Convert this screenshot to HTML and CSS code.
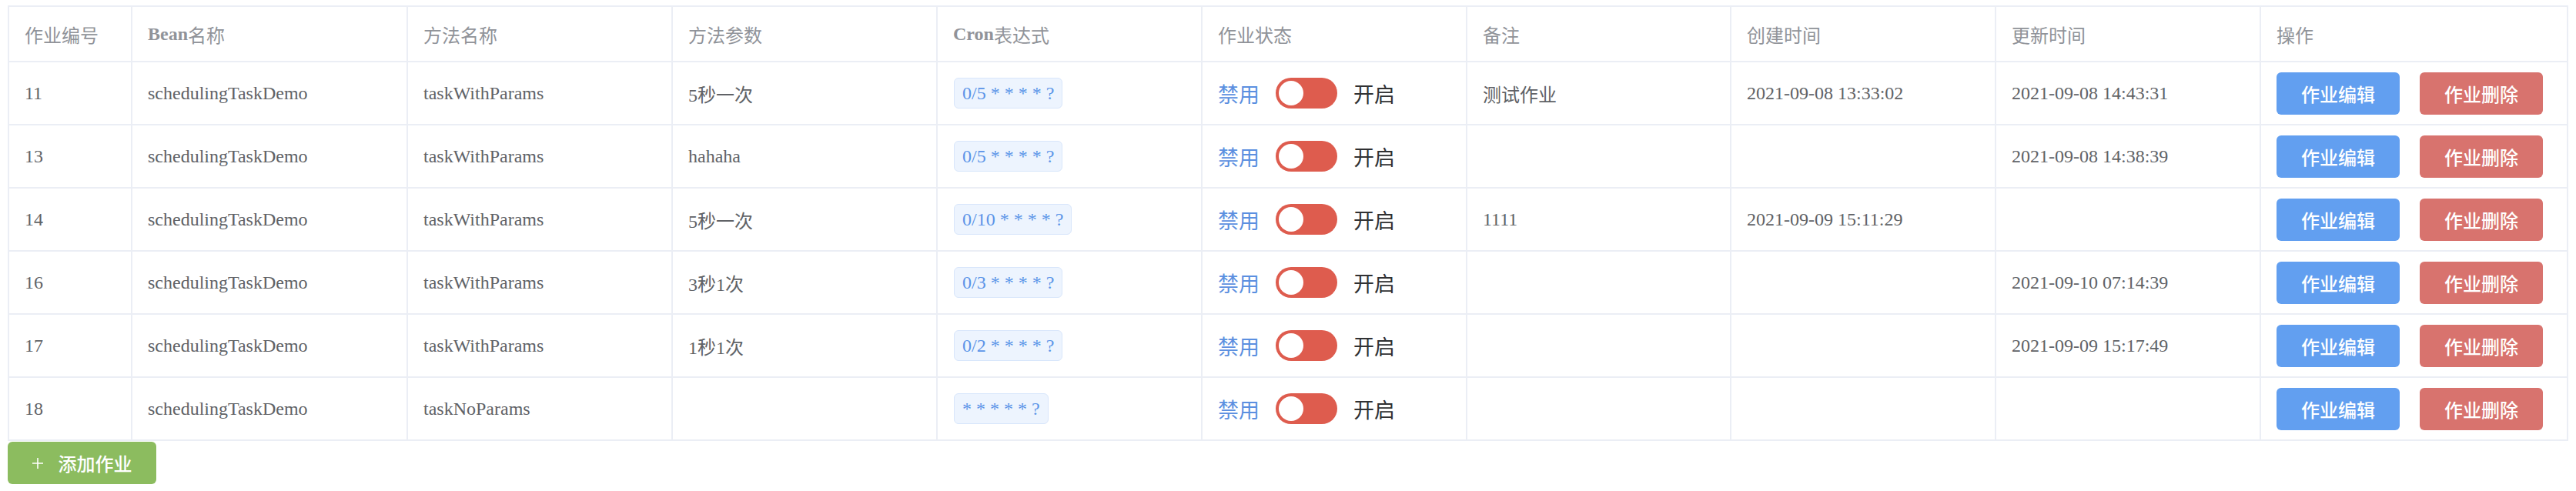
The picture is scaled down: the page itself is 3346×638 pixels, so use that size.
FILE: index.html
```html
<!DOCTYPE html>
<html lang="zh-CN">
<head>
<meta charset="utf-8">
<title>作业列表</title>
<link rel="stylesheet" href="styles.css">
</head>
<body>
<div class="page">
  <div class="table">
    <div class="row head">
      <div class="cell">作业编号</div>
      <div class="cell"><b>Bean</b>名称</div>
      <div class="cell">方法名称</div>
      <div class="cell">方法参数</div>
      <div class="cell"><b>Cron</b>表达式</div>
      <div class="cell">作业状态</div>
      <div class="cell">备注</div>
      <div class="cell">创建时间</div>
      <div class="cell">更新时间</div>
      <div class="cell">操作</div>
    </div>

    <div class="row">
      <div class="cell">11</div>
      <div class="cell">schedulingTaskDemo</div>
      <div class="cell">taskWithParams</div>
      <div class="cell">5秒一次</div>
      <div class="cell"><span class="tag">0/5 * * * * ?</span></div>
      <div class="cell"><div class="switch"><span class="sw-label on">禁用</span><span class="sw-core"><span class="sw-knob"></span></span><span class="sw-label">开启</span></div></div>
      <div class="cell">测试作业</div>
      <div class="cell">2021-09-08 13:33:02</div>
      <div class="cell">2021-09-08 14:43:31</div>
      <div class="cell ops"><button class="btn edit">作业编辑</button><button class="btn del">作业删除</button></div>
    </div>

    <div class="row">
      <div class="cell">13</div>
      <div class="cell">schedulingTaskDemo</div>
      <div class="cell">taskWithParams</div>
      <div class="cell">hahaha</div>
      <div class="cell"><span class="tag">0/5 * * * * ?</span></div>
      <div class="cell"><div class="switch"><span class="sw-label on">禁用</span><span class="sw-core"><span class="sw-knob"></span></span><span class="sw-label">开启</span></div></div>
      <div class="cell"></div>
      <div class="cell"></div>
      <div class="cell">2021-09-08 14:38:39</div>
      <div class="cell ops"><button class="btn edit">作业编辑</button><button class="btn del">作业删除</button></div>
    </div>

    <div class="row">
      <div class="cell">14</div>
      <div class="cell">schedulingTaskDemo</div>
      <div class="cell">taskWithParams</div>
      <div class="cell">5秒一次</div>
      <div class="cell"><span class="tag">0/10 * * * * ?</span></div>
      <div class="cell"><div class="switch"><span class="sw-label on">禁用</span><span class="sw-core"><span class="sw-knob"></span></span><span class="sw-label">开启</span></div></div>
      <div class="cell">1111</div>
      <div class="cell">2021-09-09 15:11:29</div>
      <div class="cell"></div>
      <div class="cell ops"><button class="btn edit">作业编辑</button><button class="btn del">作业删除</button></div>
    </div>

    <div class="row">
      <div class="cell">16</div>
      <div class="cell">schedulingTaskDemo</div>
      <div class="cell">taskWithParams</div>
      <div class="cell">3秒1次</div>
      <div class="cell"><span class="tag">0/3 * * * * ?</span></div>
      <div class="cell"><div class="switch"><span class="sw-label on">禁用</span><span class="sw-core"><span class="sw-knob"></span></span><span class="sw-label">开启</span></div></div>
      <div class="cell"></div>
      <div class="cell"></div>
      <div class="cell">2021-09-10 07:14:39</div>
      <div class="cell ops"><button class="btn edit">作业编辑</button><button class="btn del">作业删除</button></div>
    </div>

    <div class="row">
      <div class="cell">17</div>
      <div class="cell">schedulingTaskDemo</div>
      <div class="cell">taskWithParams</div>
      <div class="cell">1秒1次</div>
      <div class="cell"><span class="tag">0/2 * * * * ?</span></div>
      <div class="cell"><div class="switch"><span class="sw-label on">禁用</span><span class="sw-core"><span class="sw-knob"></span></span><span class="sw-label">开启</span></div></div>
      <div class="cell"></div>
      <div class="cell"></div>
      <div class="cell">2021-09-09 15:17:49</div>
      <div class="cell ops"><button class="btn edit">作业编辑</button><button class="btn del">作业删除</button></div>
    </div>

    <div class="row">
      <div class="cell">18</div>
      <div class="cell">schedulingTaskDemo</div>
      <div class="cell">taskNoParams</div>
      <div class="cell"></div>
      <div class="cell"><span class="tag">* * * * * ?</span></div>
      <div class="cell"><div class="switch"><span class="sw-label on">禁用</span><span class="sw-core"><span class="sw-knob"></span></span><span class="sw-label">开启</span></div></div>
      <div class="cell"></div>
      <div class="cell"></div>
      <div class="cell"></div>
      <div class="cell ops"><button class="btn edit">作业编辑</button><button class="btn del">作业删除</button></div>
    </div>
  </div>

  <button class="btn add"><svg class="plus" width="14" height="14" viewBox="0 0 14 14"><path d="M7 0V14M0 7H14" stroke="#fff" stroke-width="1.6" fill="none"/></svg><span>添加作业</span></button>
</div>
</body>
</html>
```

FILE: styles.css
```css
* { box-sizing: border-box; }

html, body {
  margin: 0;
  background: #ffffff;
}

.page {
  padding: 7px 10px 0;
  font-family: "Liberation Serif", "Noto Sans CJK SC", serif;
  font-size: 24px;
  color: #606266;
}

.table {
  border-top: 2px solid #ebeef5;
  border-left: 2px solid #ebeef5;
}

.row {
  display: grid;
  grid-template-columns: 160px 358px 344px 344px 344px 344px 343px 344px 344px 1fr;
  height: 82px;
  border-bottom: 2px solid #ebeef5;
}

.row.head {
  height: 72px;
  color: #909399;
}

.row.head b {
  font-weight: 700;
}

.cell {
  display: flex;
  align-items: center;
  padding: 0 20px;
  border-right: 2px solid #ebeef5;
  white-space: nowrap;
  overflow: hidden;
}

.tag {
  display: inline-flex;
  align-items: center;
  height: 40px;
  padding: 0 10px;
  margin-left: 1px;
  background: #edf4fe;
  border: 1px solid #d8e6fb;
  border-radius: 6px;
  color: #5b94e8;
  font-size: 24px;
}

.switch {
  display: flex;
  align-items: center;
  gap: 21px;
}

.sw-label {
  font-family: "Noto Sans CJK SC", sans-serif;
  font-size: 27px;
  color: #303133;
  line-height: 1;
}

.sw-label.on {
  color: #5b8fe0;
}

.sw-core {
  display: flex;
  align-items: center;
  width: 80px;
  height: 40px;
  border-radius: 20px;
  background: #de5c4e;
  padding: 0 4px;
}

.sw-knob {
  width: 32px;
  height: 32px;
  border-radius: 50%;
  background: #ffffff;
}

.ops {
  gap: 26px;
}

.btn {
  display: inline-flex;
  align-items: center;
  justify-content: center;
  border: none;
  border-radius: 6px;
  color: #ffffff;
  font-family: "Noto Sans CJK SC", sans-serif;
  font-size: 24px;
  font-weight: 500;
  cursor: pointer;
}

.btn.edit,
.btn.del {
  width: 160px;
  height: 55px;
}

.btn.edit {
  background: #629ff0;
}

.btn.del {
  background: #d8736e;
}

.btn.add {
  margin-top: 1px;
  width: 193px;
  height: 55px;
  gap: 20px;
  background: #8cbc5f;
}

.plus {
  display: block;
}
```
